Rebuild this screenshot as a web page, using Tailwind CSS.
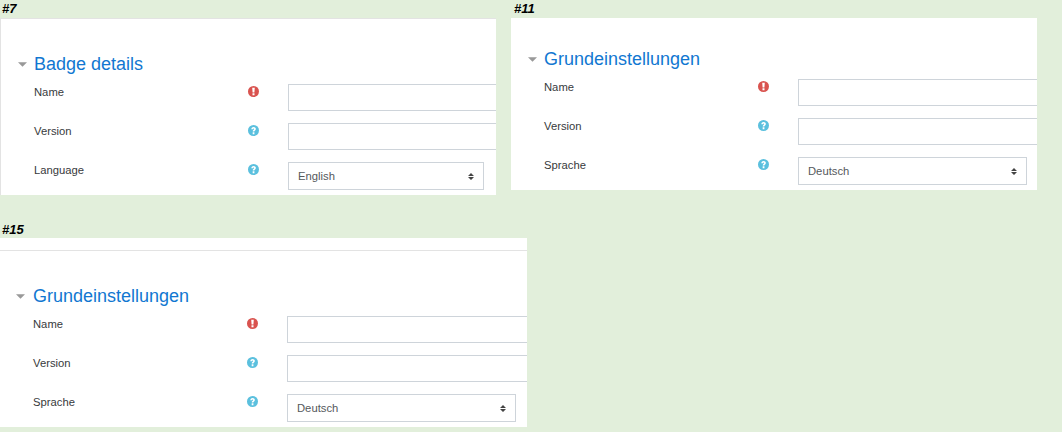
<!DOCTYPE html>
<html lang="en">
<head>
    <meta charset="UTF-8">
    <title>Moodle form screenshots</title>
    <script src="https://cdn.jsdelivr.net/npm/@tailwindcss/browser@4"></script>
</head>
<body class="w-[1062px] h-[432px] overflow-hidden bg-[#e2efdb] font-['Liberation_Sans',Arial,sans-serif]">
    <div class="flex items-start">
        <!-- #7 -->
        <div class="w-[496px] shrink-0">
            <div class="h-[18px] pl-[2px] pt-[1px] text-[13px] leading-[15px] font-bold italic text-black">#7</div>
            <div class="h-[177px] overflow-hidden bg-white border-t border-l border-[#e3e3e3] pl-[17px] pt-[34px]">
                <div class="flex items-center h-[22px]">
                    <svg class="w-[9px] h-[5px] mr-[7px] mt-[1px] shrink-0" viewBox="0 0 10 5"><path d="M0 0H10L5 5Z" fill="#999999"/></svg>
                    <h3 class="text-[18px] leading-[22px] text-[#1177d1]">Badge details</h3>
                </div>
                <div class="mt-[9px] flex flex-col gap-[12px]">
                    <div class="flex h-[27px]">
                        <span class="w-[214px] shrink-0 ml-[16px] pt-[1px] text-[11.25px] leading-[15px] text-[#373a3c]">Name</span>
                        <svg class="w-[11px] h-[11px] mt-[2px] shrink-0" viewBox="0 0 12 12"><circle cx="6" cy="6" r="6" fill="#d9534f"/><path d="M4.6 2H7.4L7 7.2H5ZM4.9 8H7.1V10H4.9Z" fill="#fff"/></svg>
                        <div class="ml-[29px] w-[300px] h-[27px] border border-[#ced4da] shrink-0"></div>
                    </div>
                    <div class="flex h-[27px]">
                        <span class="w-[214px] shrink-0 ml-[16px] pt-[1px] text-[11.25px] leading-[15px] text-[#373a3c]">Version</span>
                        <svg class="w-[11px] h-[11px] mt-[2px] shrink-0" viewBox="0 0 12 12"><circle cx="6" cy="6" r="6" fill="#5bc0de"/><path d="M3.6 4.5C3.7 3 4.8 2.1 6.1 2.1 7.5 2.1 8.6 3 8.6 4.3 8.6 5.8 6.9 6 6.9 7.2H5.2C5 5.5 6.7 5.2 6.7 4.4 6.7 4 6.4 3.8 6 3.8 5.6 3.8 5.4 4.1 5.3 4.7ZM5.1 7.9H7V10H5.1Z" fill="#fff"/></svg>
                        <div class="ml-[29px] w-[300px] h-[27px] border border-[#ced4da] shrink-0"></div>
                    </div>
                    <div class="flex h-[28px]">
                        <span class="w-[214px] shrink-0 ml-[16px] pt-[1px] text-[11.25px] leading-[15px] text-[#373a3c]">Language</span>
                        <svg class="w-[11px] h-[11px] mt-[2px] shrink-0" viewBox="0 0 12 12"><circle cx="6" cy="6" r="6" fill="#5bc0de"/><path d="M3.6 4.5C3.7 3 4.8 2.1 6.1 2.1 7.5 2.1 8.6 3 8.6 4.3 8.6 5.8 6.9 6 6.9 7.2H5.2C5 5.5 6.7 5.2 6.7 4.4 6.7 4 6.4 3.8 6 3.8 5.6 3.8 5.4 4.1 5.3 4.7ZM5.1 7.9H7V10H5.1Z" fill="#fff"/></svg>
                        <div class="ml-[29px] w-[196px] h-[28px] border border-[#ced4da] shrink-0 flex items-center justify-between pl-[9px] pr-[9px] text-[11.25px] text-[#55595c]">
                            <span>English</span>
                            <svg class="w-[6px] h-[7px]" viewBox="0 0 6 7"><path d="M0 3L3 0 6 3ZM0 4H6L3 7Z" fill="#444"/></svg>
                        </div>
                    </div>
                </div>
            </div>
        </div>
        <!-- #11 -->
        <div class="ml-[15px] w-[526px] shrink-0">
            <div class="h-[18px] pl-[3px] pt-[1px] text-[13px] leading-[15px] font-bold italic text-black">#11</div>
            <div class="h-[172px] overflow-hidden bg-white pl-[17px] pt-[30px]">
                <div class="flex items-center h-[22px]">
                    <svg class="w-[9px] h-[5px] mr-[7px] mt-[1px] shrink-0" viewBox="0 0 10 5"><path d="M0 0H10L5 5Z" fill="#999999"/></svg>
                    <h3 class="text-[18px] leading-[22px] text-[#1177d1]">Grundeinstellungen</h3>
                </div>
                <div class="mt-[9px] flex flex-col gap-[12px]">
                    <div class="flex h-[27px]">
                        <span class="w-[214px] shrink-0 ml-[16px] pt-[1px] text-[11.25px] leading-[15px] text-[#373a3c]">Name</span>
                        <svg class="w-[11px] h-[11px] mt-[2px] shrink-0" viewBox="0 0 12 12"><circle cx="6" cy="6" r="6" fill="#d9534f"/><path d="M4.6 2H7.4L7 7.2H5ZM4.9 8H7.1V10H4.9Z" fill="#fff"/></svg>
                        <div class="ml-[29px] w-[300px] h-[27px] border border-[#ced4da] shrink-0"></div>
                    </div>
                    <div class="flex h-[27px]">
                        <span class="w-[214px] shrink-0 ml-[16px] pt-[1px] text-[11.25px] leading-[15px] text-[#373a3c]">Version</span>
                        <svg class="w-[11px] h-[11px] mt-[2px] shrink-0" viewBox="0 0 12 12"><circle cx="6" cy="6" r="6" fill="#5bc0de"/><path d="M3.6 4.5C3.7 3 4.8 2.1 6.1 2.1 7.5 2.1 8.6 3 8.6 4.3 8.6 5.8 6.9 6 6.9 7.2H5.2C5 5.5 6.7 5.2 6.7 4.4 6.7 4 6.4 3.8 6 3.8 5.6 3.8 5.4 4.1 5.3 4.7ZM5.1 7.9H7V10H5.1Z" fill="#fff"/></svg>
                        <div class="ml-[29px] w-[300px] h-[27px] border border-[#ced4da] shrink-0"></div>
                    </div>
                    <div class="flex h-[28px]">
                        <span class="w-[214px] shrink-0 ml-[16px] pt-[1px] text-[11.25px] leading-[15px] text-[#373a3c]">Sprache</span>
                        <svg class="w-[11px] h-[11px] mt-[2px] shrink-0" viewBox="0 0 12 12"><circle cx="6" cy="6" r="6" fill="#5bc0de"/><path d="M3.6 4.5C3.7 3 4.8 2.1 6.1 2.1 7.5 2.1 8.6 3 8.6 4.3 8.6 5.8 6.9 6 6.9 7.2H5.2C5 5.5 6.7 5.2 6.7 4.4 6.7 4 6.4 3.8 6 3.8 5.6 3.8 5.4 4.1 5.3 4.7ZM5.1 7.9H7V10H5.1Z" fill="#fff"/></svg>
                        <div class="ml-[29px] w-[229px] h-[28px] border border-[#ced4da] shrink-0 flex items-center justify-between pl-[9px] pr-[9px] text-[11.25px] text-[#55595c]">
                            <span>Deutsch</span>
                            <svg class="w-[6px] h-[7px]" viewBox="0 0 6 7"><path d="M0 3L3 0 6 3ZM0 4H6L3 7Z" fill="#444"/></svg>
                        </div>
                    </div>
                </div>
            </div>
        </div>
    </div>
    <!-- #15 -->
    <div class="mt-[25px] w-[527px]">
        <div class="h-[18px] pl-[2px] pt-[2px] text-[13px] leading-[15px] font-bold italic text-black">#15</div>
        <div class="h-[189px] overflow-hidden bg-white pt-[12px]">
            <div class="border-t border-[#e3e3e3] pl-[16px] pt-[34px]">
                <div class="flex items-center h-[22px]">
                    <svg class="w-[9px] h-[5px] mr-[8px] mt-[1px] shrink-0" viewBox="0 0 10 5"><path d="M0 0H10L5 5Z" fill="#999999"/></svg>
                    <h3 class="text-[18px] leading-[22px] text-[#1177d1]">Grundeinstellungen</h3>
                </div>
                <div class="mt-[9px] flex flex-col gap-[12px]">
                    <div class="flex h-[27px]">
                        <span class="w-[214px] shrink-0 ml-[17px] pt-[1px] text-[11.25px] leading-[15px] text-[#373a3c]">Name</span>
                        <svg class="w-[11px] h-[11px] mt-[2px] shrink-0" viewBox="0 0 12 12"><circle cx="6" cy="6" r="6" fill="#d9534f"/><path d="M4.6 2H7.4L7 7.2H5ZM4.9 8H7.1V10H4.9Z" fill="#fff"/></svg>
                        <div class="ml-[29px] w-[300px] h-[27px] border border-[#ced4da] shrink-0"></div>
                    </div>
                    <div class="flex h-[27px]">
                        <span class="w-[214px] shrink-0 ml-[17px] pt-[1px] text-[11.25px] leading-[15px] text-[#373a3c]">Version</span>
                        <svg class="w-[11px] h-[11px] mt-[2px] shrink-0" viewBox="0 0 12 12"><circle cx="6" cy="6" r="6" fill="#5bc0de"/><path d="M3.6 4.5C3.7 3 4.8 2.1 6.1 2.1 7.5 2.1 8.6 3 8.6 4.3 8.6 5.8 6.9 6 6.9 7.2H5.2C5 5.5 6.7 5.2 6.7 4.4 6.7 4 6.4 3.8 6 3.8 5.6 3.8 5.4 4.1 5.3 4.7ZM5.1 7.9H7V10H5.1Z" fill="#fff"/></svg>
                        <div class="ml-[29px] w-[300px] h-[27px] border border-[#ced4da] shrink-0"></div>
                    </div>
                    <div class="flex h-[28px]">
                        <span class="w-[214px] shrink-0 ml-[17px] pt-[1px] text-[11.25px] leading-[15px] text-[#373a3c]">Sprache</span>
                        <svg class="w-[11px] h-[11px] mt-[2px] shrink-0" viewBox="0 0 12 12"><circle cx="6" cy="6" r="6" fill="#5bc0de"/><path d="M3.6 4.5C3.7 3 4.8 2.1 6.1 2.1 7.5 2.1 8.6 3 8.6 4.3 8.6 5.8 6.9 6 6.9 7.2H5.2C5 5.5 6.7 5.2 6.7 4.4 6.7 4 6.4 3.8 6 3.8 5.6 3.8 5.4 4.1 5.3 4.7ZM5.1 7.9H7V10H5.1Z" fill="#fff"/></svg>
                        <div class="ml-[29px] w-[229px] h-[28px] border border-[#ced4da] shrink-0 flex items-center justify-between pl-[9px] pr-[9px] text-[11.25px] text-[#55595c]">
                            <span>Deutsch</span>
                            <svg class="w-[6px] h-[7px]" viewBox="0 0 6 7"><path d="M0 3L3 0 6 3ZM0 4H6L3 7Z" fill="#444"/></svg>
                        </div>
                    </div>
                </div>
            </div>
        </div>
    </div>
</body>
</html>
